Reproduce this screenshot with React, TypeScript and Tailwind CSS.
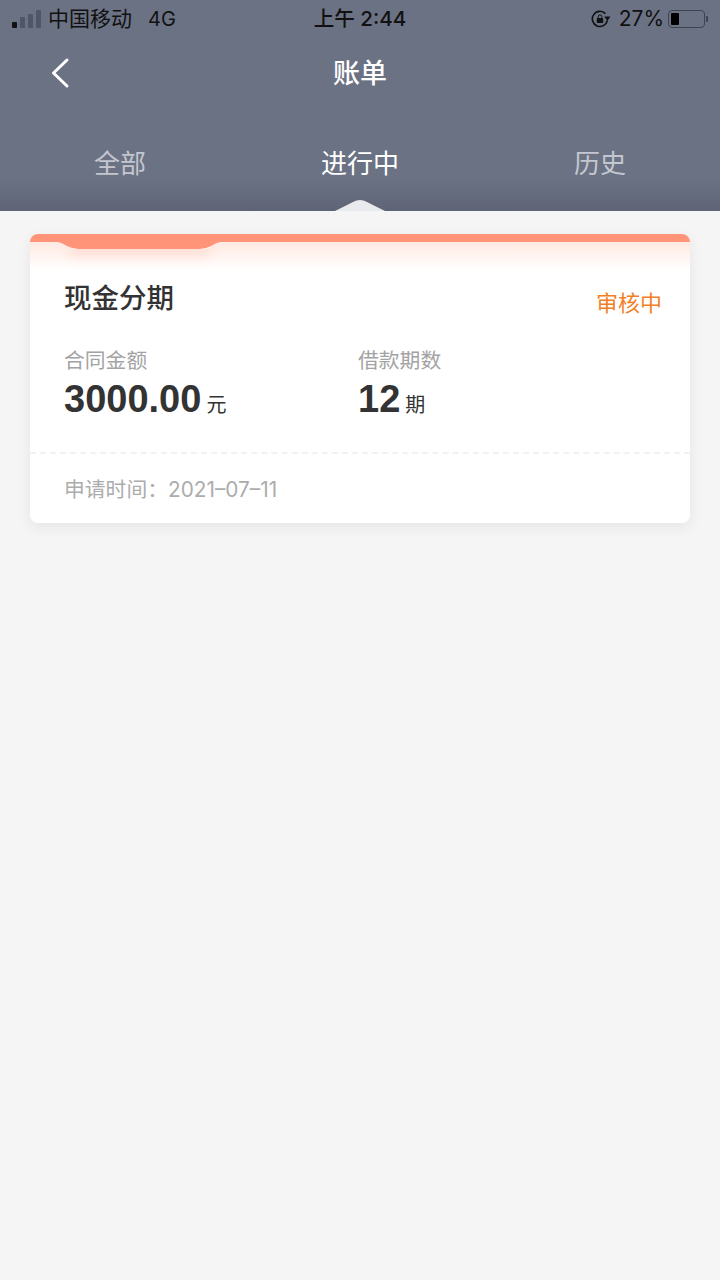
const cjk = 'font-["Inter","Noto_Sans_CJK_SC",sans-serif]';

function Signal() {
  return (
    <div className="flex items-end gap-[3px] h-[18px]">
      <span className="w-[5px] h-[6px] rounded-[1px] bg-[#111111]" />
      <span className="w-[5px] h-[11px] rounded-[1px] bg-[#4f5667]" />
      <span className="w-[5px] h-[14px] rounded-[1px] bg-[#4f5667]" />
      <span className="w-[5px] h-[18px] rounded-[1px] bg-[#4f5667]" />
    </div>
  );
}

function RotationLock() {
  return (
    <svg width="20" height="18" viewBox="0 0 20 18" fill="none">
      <path d="M16.4 10.5A7.6 7.6 0 1 1 14.4 3.6" stroke="#111" strokeWidth="1.6" />
      <path d="M13.2 6.6 L19.4 6.6 L16.4 11 Z" fill="#111" />
      <rect x="5.8" y="8" width="6.4" height="5" rx="0.8" fill="#111" />
      <path d="M7.2 8V6.6a1.8 1.8 0 0 1 3.6 0V8" stroke="#111" strokeWidth="1" />
    </svg>
  );
}

function Battery() {
  return (
    <div className="flex items-center gap-[1px]">
      <div className="w-[37px] h-[18px] rounded-[4px] border border-[#3e4352] p-[2px]">
        <div className="w-[8px] h-full rounded-[1px] bg-black" />
      </div>
      <span className="w-[2px] h-[6px] rounded-r-[1px] bg-[#3e4352]" />
    </div>
  );
}

function Stat({ label, value, unit, width }: { label: string; value: string; unit: string; width: string }) {
  return (
    <div className={width}>
      <p className="text-[20.8px] leading-[26px] text-[#a3a3a3]">{label}</p>
      <p className="flex items-baseline gap-[5px] h-[50px]">
        <span className='font-["Liberation_Sans"] font-bold text-[38px] leading-[50px] text-[#333333]'>{value}</span>
        <span className="text-[20px] text-[#333333]">{unit}</span>
      </p>
    </div>
  );
}

export default function App() {
  return (
    <div className={`${cjk} flex flex-col w-[720px] h-[1280px] overflow-hidden bg-[#f5f5f5]`}>
      <div className="relative h-[211px] shrink-0 bg-gradient-to-b from-[#6b7284] from-85% to-[#5e6475]">
        <div className="flex items-center justify-between h-[38px] pl-3 pr-[12px] text-[21px] text-[#111111]">
          <div className="flex flex-1 items-center gap-[7px]">
            <Signal />
            <span>中国移动</span>
            <span className="ml-[9px] text-[20px]">4G</span>
          </div>
          <span className="flex-1 text-center text-[20.6px] font-medium">上午 2:44</span>
          <div className="flex flex-1 items-center justify-end">
            <RotationLock />
            <span className="ml-[8px] mr-[4px] text-[21px]">27%</span>
            <Battery />
          </div>
        </div>
        <div className="flex items-center justify-center relative h-[70px]">
          <svg className="absolute left-[50px] top-[19px]" width="20" height="32" viewBox="0 0 20 32" fill="none">
            <path d="M17 3 L3.5 16 L17 29" stroke="#fff" strokeWidth="3" strokeLinecap="round" strokeLinejoin="round" />
          </svg>
          <span className="mt-[3px] text-[27px] font-medium text-white">账单</span>
        </div>
        <div className="grid grid-cols-3 mt-[33px] text-center text-[26px] leading-[46px] text-[#c4c7cf]">
          <span>全部</span>
          <span className="text-white">进行中</span>
          <span>历史</span>
        </div>
        <svg className="absolute left-[335px] bottom-0" width="50" height="12" viewBox="0 0 50 12">
          <path d="M0 12 L18 3 Q25 -1 32 3 L50 12 Z" fill="#e9eaee" />
        </svg>
      </div>

      <div className="px-[30px] pt-[23px]">
        <div className="relative h-[289px] rounded-[8px] bg-white shadow-[0_4px_14px_rgba(0,0,0,0.07)] overflow-hidden">
          <div className="h-[8px] bg-[#ff9479]" />
          <div className="absolute left-0 right-0 top-[8px] h-[28px] bg-gradient-to-b from-[#ffe9e2] to-white" />
          <div className="absolute left-[40px] top-[8px] w-[140px] h-[7px] shadow-[0_6px_12px_rgba(255,148,121,0.3)]" />
          <svg className="absolute left-[23px] top-[7px]" width="172" height="9" viewBox="0 0 172 9">
            <path d="M0 0 L172 0 Q164 1 158 5 Q152 8 146 8 L26 8 Q20 8 14 5 Q8 1 0 0 Z" fill="#ff9479" />
          </svg>
          <div className="relative flex items-start justify-between pl-[34px] pr-[28px] pt-[36px]">
            <h2 className="text-[27.5px] leading-[40px] font-medium text-[#333333]">现金分期</h2>
            <span className="mt-[9px] text-[22px] leading-[32px] text-[#f27f27]">审核中</span>
          </div>
          <div className="relative flex pl-[34px] mt-[29px]">
            <Stat label="合同金额" value="3000.00" unit="元" width="w-[294px]" />
            <Stat label="借款期数" value="12" unit="期" width="w-[200px]" />
          </div>
          <div className="mt-[28px] border-t-2 border-dashed border-[#f2f2f2]" />
          <p className="pl-[34px] pt-[20px] text-[20.8px] leading-[32px] text-[#acacac]">申请时间：2021–07–11</p>
        </div>
      </div>
    </div>
  );
}
